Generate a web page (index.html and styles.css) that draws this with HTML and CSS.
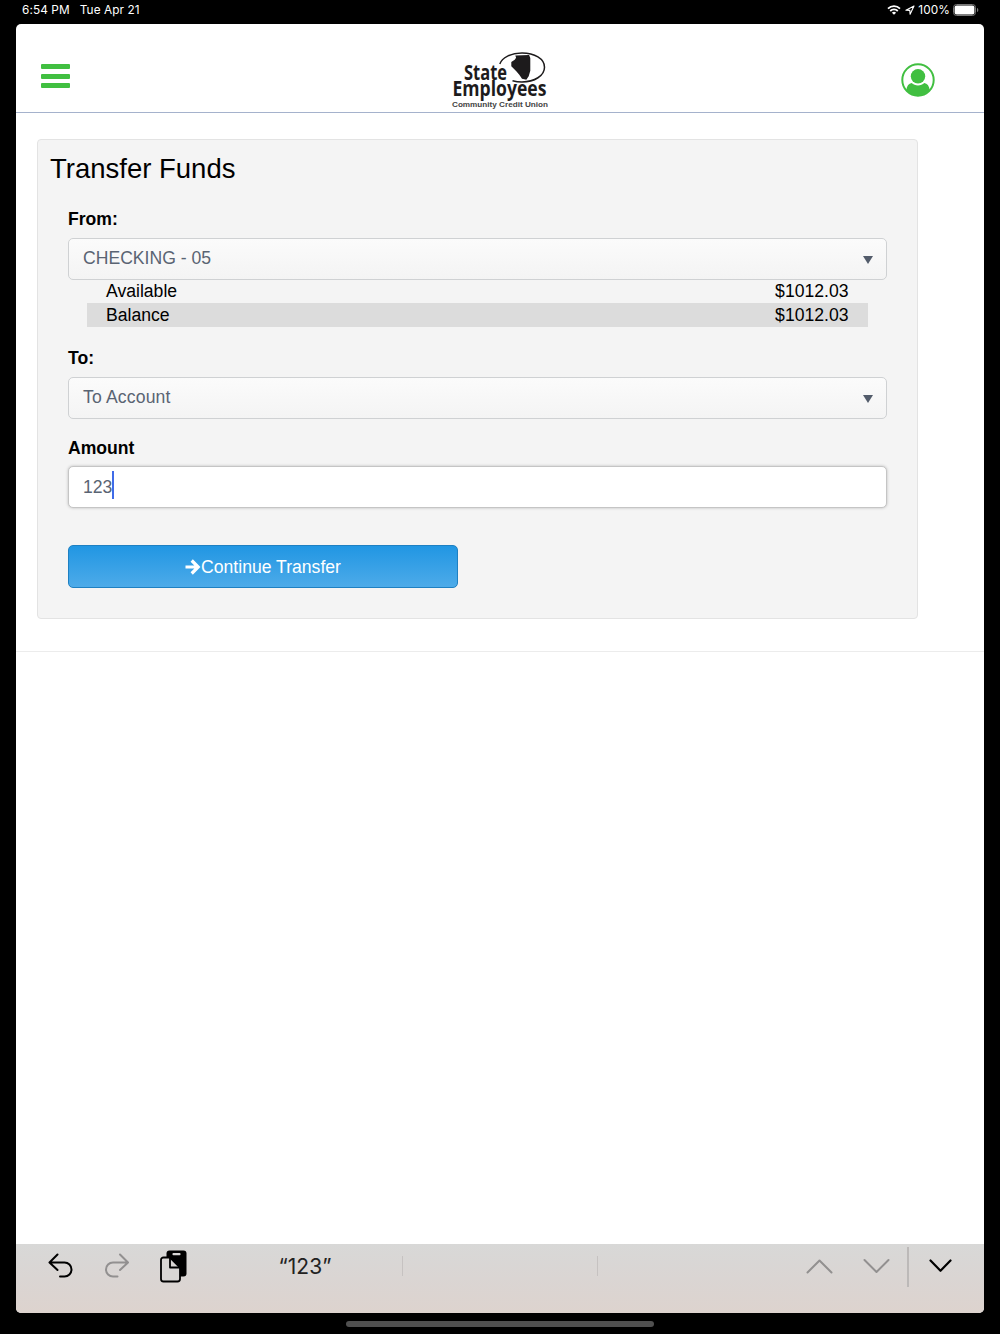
FILE: index.html
```
<!DOCTYPE html>
<html lang="en">

<head>
    <meta charset="utf-8">
    <title>Transfer Funds</title>
    <link rel="stylesheet" href="styles.css">
</head>

<body>
    <div class="status-bar">
        <span class="time">6:54 PM</span>
        <span class="date">Tue Apr 21</span>
        <div class="status-right">
            <svg class="wifi" width="14" height="10" viewBox="0 0 14 10" fill="none" stroke="#fff" stroke-width="1.8">
                <path d="M1 3.600a8.600 8.600 0 0 1 12 0M3.200 6a5.600 5.600 0 0 1 7.600 0" />
                <path d="M7 9.800L4.900 7.700a3 3 0 0 1 4.200 0z" fill="#fff" stroke="none" />
            </svg>
            <svg class="location" width="10" height="10" viewBox="0 0 10 10" fill="none" stroke="#fff" stroke-width="1.1" stroke-linejoin="round">
                <path d="M9 1L.9 5.200l3.900.2.300 3.900z" />
            </svg>
            <span class="percent">100%</span>
            <svg class="battery" width="26" height="12" viewBox="0 0 26 12">
                <rect x=".5" y=".5" width="22" height="11" rx="3" fill="none" stroke="#777" />
                <rect x="1.600" y="1.600" width="19.800" height="8.800" rx="2" fill="#fff" />
                <path d="M24 4v4c1-.4 1.300-1.200 1.300-2s-.3-1.600-1.300-2z" fill="#777" />
            </svg>
        </div>
    </div>

    <div class="screen">
        <header>
            <div class="menu"><i></i><i></i><i></i></div>
            <svg class="logo" width="104" height="60" viewBox="0 0 104 60">
                <path d="M49.800 13C52 6.500 61 2 72 2c12.500 0 22.500 5.800 22.500 14.200S84.500 31 72 31c-3.600 0-6.500-.4-9.500-1.200" fill="none" stroke="#1d1b1c" stroke-width="1.500" />
                <path d="M65.300 4.500l13.800-.6 1.200 3.100v12.700l-1.600 5.600-2.400 3.400-4.300-1-2.700-4-3-3.400-5-5V11l3.400-2.300 1.400-2z" fill="#1d1b1c" />
                <text class="name" x="14" y="29" textLength="43" lengthAdjust="spacingAndGlyphs">State</text>
                <text class="name" x="2.500" y="45.400" textLength="94" lengthAdjust="spacingAndGlyphs">Employees</text>
                <text class="tagline" x="2" y="55.500" textLength="96" lengthAdjust="spacingAndGlyphs">Community Credit Union</text>
            </svg>
            <svg class="user" width="34" height="34" viewBox="0 0 34 34">
                <circle cx="17" cy="17" r="15.700" fill="#fff" stroke="#41bf41" stroke-width="2" />
                <circle cx="17" cy="13.300" r="7.200" fill="#41bf41" />
                <path d="M5.300 27c.5-4 2.500-6.500 5.400-6.900 1.600 1.600 3.800 2.400 6.300 2.400s4.700-.8 6.300-2.400c2.900.4 4.900 2.900 5.400 6.900-3 3.600-7 6-11.700 6S8.300 30.600 5.300 27z" fill="#41bf41" />
            </svg>
        </header>

        <main>
            <div class="panel">
                <h1>Transfer Funds</h1>
                <div class="form">
                    <label>From:</label>
                    <div class="select">
                        <span>CHECKING - 05</span>
                        <i class="caret"></i>
                    </div>
                    <div class="amounts">
                        <div class="row"><span>Available</span><span>$1012.03</span></div>
                        <div class="row"><span>Balance</span><span>$1012.03</span></div>
                    </div>
                    <label class="to">To:</label>
                    <div class="select">
                        <span class="placeholder">To Account</span>
                        <i class="caret"></i>
                    </div>
                    <label class="amount">Amount</label>
                    <div class="input"><span>123</span><i class="cursor"></i></div>
                    <button class="btn">
                        <svg width="16" height="16" viewBox="0 0 16 16" fill="none" stroke="#fff" stroke-width="3.200">
                            <path d="M.5 8h12M6.700 1.500L13.200 8l-6.500 6.500" />
                        </svg><span>Continue Transfer</span>
                    </button>
                </div>
            </div>
        </main>

        <div class="keyboard-bar">
            <svg class="undo" width="26" height="26" viewBox="0 0 26 26">
                <path d="M9.500 1.500L1.500 9.500l8 7.500M2 9.500h14.500a7 7 0 0 1 0 14H12" />
            </svg>
            <svg class="redo" width="26" height="26" viewBox="0 0 26 26">
                <path d="M16 1.500L24 9.500l-8 7.500M23.500 9.500H9a7 7 0 0 0 0 14h4.500" />
            </svg>
            <svg class="paste" width="28" height="33" viewBox="0 0 28 33">
                <rect x="6.500" y="0.500" width="20" height="26" rx="3" fill="#000" />
                <rect x="12.500" y="3" width="8" height="2.200" rx=".8" fill="#d9d7d6" />
                <path d="M3.500 7.500h6.500l10 10v11.500a2.500 2.500 0 0 1-2.500 2.500H3.500A2.500 2.500 0 0 1 1 29V10a2.500 2.500 0 0 1 2.500-2.500z" fill="#d9d6d4" stroke="#000" stroke-width="1.800" />
                <path d="M10 8v9.500h9.500" fill="none" stroke="#000" stroke-width="1.800" />
            </svg>
            <div class="suggestions">
                <span>“123”</span>
                <span></span>
                <span></span>
            </div>
            <svg class="prev" width="27" height="16" viewBox="0 0 27 16">
                <path d="M1.500 14.500l12-12 12 12" />
            </svg>
            <svg class="next" width="27" height="16" viewBox="0 0 27 16">
                <path d="M1.500 2l12 12 12-12" />
            </svg>
            <i class="divider"></i>
            <svg class="hide" width="23" height="14" viewBox="0 0 23 14">
                <path d="M1.500 1.500l10 10.300 10-10.300" />
            </svg>
        </div>
    </div>
    <div class="home-indicator"></div>
</body>

</html>
```
FILE: styles.css
```
* {
    box-sizing: border-box;
}

body {
    margin: 0;
    height: 1334px;
    background: #000;
    font-family: "Liberation Sans", Arial, sans-serif;
    font-size: 17.6px;
    color: #000;
    overflow: hidden;
}

svg {
    display: block;
    flex: none;
}

.status-bar {
    display: flex;
    align-items: center;
    height: 24px;
    padding: 0 21px 4px 22px;
    color: #fff;
    font-family: Inter, sans-serif;
    font-size: 11.8px;
    line-height: 20px;
    letter-spacing: 0.1px;
}

.date {
    margin-left: 10px;
}

.status-right {
    display: flex;
    align-items: center;
    margin-left: auto;
}

.location {
    margin: 0 3px 0 4px;
}

.battery {
    margin-left: 3px;
}

.screen {
    display: flex;
    flex-direction: column;
    width: 968px;
    height: 1289px;
    margin: 0 auto;
    background: #fff;
    border-radius: 5px;
    overflow: hidden;
}

header {
    display: flex;
    justify-content: space-between;
    height: 89px;
    padding: 0 49px 0 25px;
    border-bottom: 1px solid #a5b2cc;
}

.menu {
    width: 29px;
    margin-top: 40px;
}

.menu i {
    display: block;
    height: 5px;
    margin-bottom: 4.5px;
    border-radius: 1px;
    background: #41bf41;
}

.logo {
    margin-top: 27px;
    margin-left: 32px;
    overflow: visible;
}

.logo text {
    fill: #1d1b1c;
}

.name {
    font-family: "Open Sans", sans-serif;
    font-size: 22px;
    font-weight: bold;
}

.logo .tagline {
    fill: #444;
    font-size: 6.8px;
    font-weight: bold;
}

.user {
    margin-top: 39px;
}

main {
    height: 539px;
    padding: 26px 66px 0 21px;
    border-bottom: 1px solid #ececec;
}

.panel {
    height: 480px;
    padding: 12px 31px 0 12px;
    background: #f4f4f4;
    border: 1px solid #e3e3e3;
    border-radius: 4px;
}

h1 {
    margin: 0;
    font-size: 27.5px;
    font-weight: normal;
    line-height: 34px;
}

.form {
    padding: 23px 0 0 18px;
}

label {
    display: block;
    margin-bottom: 9px;
    font-weight: bold;
    line-height: 20px;
}

.select,
.input {
    display: flex;
    align-items: center;
    height: 42px;
    margin-right: -0.5px;
    padding: 0 13px 0 14px;
    border: 1px solid #cfd1d3;
    border-radius: 5px;
    color: #5a6473;
}

.select {
    justify-content: space-between;
    background: linear-gradient(#fbfbfb, #f4f4f4);
    padding-bottom: 1px;
}

.placeholder {
    letter-spacing: 0.15px;
}

.caret {
    margin-top: 2px;
    border: 5px solid transparent;
    border-top: 8px solid #535c6b;
    border-bottom: 0;
}

.amounts {
    padding: 0 18px 0 19px;
}

.row {
    display: flex;
    justify-content: space-between;
    height: 23px;
    padding: 0 19.5px 0 19px;
    line-height: 23px;
}

.row:nth-child(even) {
    height: 24px;
    background: #dcdcdc;
    line-height: 24px;
}

.to {
    margin-top: 21px;
}

.amount {
    margin: 19px 0 8px;
}

.input {
    background: #fff;
    border-color: #c5c5c5;
    box-shadow: 0 0 3px #bbb;
}

.cursor {
    width: 2px;
    height: 28px;
    margin-top: -5px;
    background: #3f6be8;
}

.btn {
    display: flex;
    align-items: center;
    justify-content: center;
    width: 390px;
    height: 43px;
    margin-top: 37px;
    padding: 0;
    border: 1px solid #1e80c2;
    border-radius: 5px;
    background: linear-gradient(#2196e3, #4dabe9);
    color: #fff;
    font: inherit;
}

.btn span {
    padding-top: 1px;
}

.keyboard-bar {
    display: flex;
    height: 69px;
    margin-top: auto;
    padding: 0 32px;
    background: linear-gradient(#d8d8d7, #dad5d3 50%, #ddd3ce);
}

.keyboard-bar path {
    stroke-linecap: round;
    stroke-linejoin: round;
}

.undo,
.redo,
.prev,
.next,
.hide {
    fill: none;
    stroke: #000;
    stroke-width: 2;
}

.undo,
.redo {
    margin-top: 9px;
}

.redo {
    margin-left: 30px;
}

.redo,
.prev,
.next {
    stroke: #929090;
}

.paste {
    margin: 6px 0 0 30px;
}

.suggestions {
    display: flex;
    margin: 12px 0 0 20px;
    height: 20px;
    color: #222;
    font-family: Inter, sans-serif;
    font-size: 21px;
    line-height: 21px;
}

.suggestions span {
    width: 195px;
    text-align: center;
    border-right: 1px solid #c6c2c1;
}

.suggestions span:last-child {
    border-right: 0;
}

.prev {
    margin: 14px 0 0 auto;
}

.next {
    margin: 14px 0 0 30px;
}

.divider {
    width: 2px;
    height: 40px;
    margin: 3px 0 0 17px;
    background: #bcb9b8;
}

.hide {
    margin: 15px 0 0 20px;
    stroke-width: 2.2;
}

.home-indicator {
    width: 308px;
    height: 6px;
    margin: 8px auto 0;
    border-radius: 3px;
    background: #505050;
}
```
